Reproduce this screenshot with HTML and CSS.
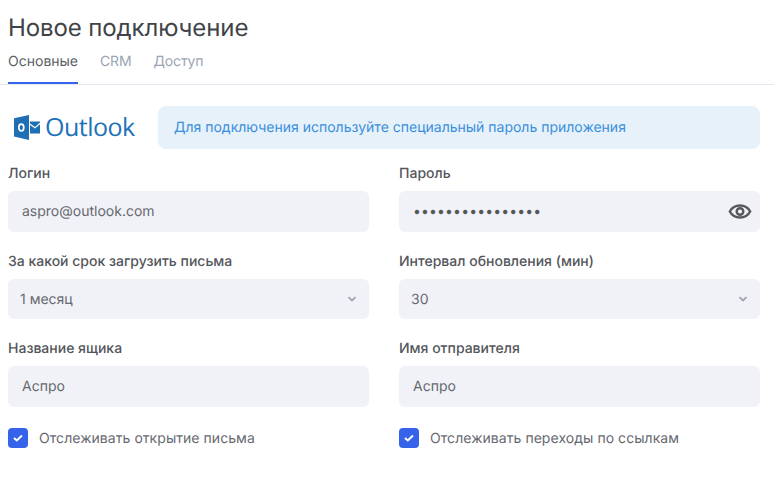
FILE: index.html
```html
<!DOCTYPE html>
<html lang="ru">
<head>
<meta charset="utf-8">
<title>Новое подключение</title>
<link rel="stylesheet" href="styles.css">
</head>
<body>
<header class="head">
  <h1 class="title">Новое подключение</h1>
  <nav class="tabs">
    <a class="tab active">Основные</a>
    <a class="tab">CRM</a>
    <a class="tab">Доступ</a>
  </nav>
</header>
<main class="content">
  <div class="top">
    <div class="logo">
      <svg class="logo-icon" width="27" height="25" viewBox="0 0 27 25">
        <path d="M0 3.2 L15 0 V25 L0 21.6 Z" fill="#1f6fb5"/>
        <path d="M16 6.500 H26 V7.500 L21 12 L16 8.600 Z" fill="#1f6fb5"/>
        <path d="M16 10 L21 13.600 L26 9.200 V18.500 H16 Z" fill="#1f6fb5"/>
        <ellipse cx="7.300" cy="12.500" rx="2.500" ry="3.400" fill="none" stroke="#fff" stroke-width="1.700"/>
      </svg>
      <span class="logo-text">Outlook</span>
    </div>
    <div class="notice">Для подключения используйте специальный пароль приложения</div>
  </div>
  <form class="grid">
    <div class="field">
      <span class="label">Логин</span>
      <div class="control"><span class="value">aspro@outlook.com</span></div>
    </div>
    <div class="field">
      <span class="label">Пароль</span>
      <div class="control">
        <span class="value dots">••••••••••••••••</span>
        <svg class="eye" width="24" height="24" viewBox="0 0 24 24">
          <path d="M12 6.500C7.500 6.500 3.700 9 1.800 12.500 3.700 16 7.500 18.500 12 18.500S20.300 16 22.200 12.500C20.300 9 16.500 6.500 12 6.500Z" fill="none" stroke="#55585d" stroke-width="2.400"/>
          <circle cx="12" cy="12.500" r="3.300" fill="none" stroke="#55585d" stroke-width="2.400"/>
        </svg>
      </div>
    </div>
    <div class="field">
      <span class="label">За какой срок загрузить письма</span>
      <div class="control select"><span class="value">1 месяц</span>
        <svg class="chev" width="10" height="6" viewBox="0 0 10 6"><path d="M1.500 1.200 5 4.500 8.500 1.200" fill="none" stroke="#9aa5b4" stroke-width="1.800"/></svg>
      </div>
    </div>
    <div class="field">
      <span class="label">Интервал обновления (мин)</span>
      <div class="control select"><span class="value">30</span>
        <svg class="chev" width="10" height="6" viewBox="0 0 10 6"><path d="M1.500 1.200 5 4.500 8.500 1.200" fill="none" stroke="#9aa5b4" stroke-width="1.800"/></svg>
      </div>
    </div>
    <div class="field">
      <span class="label">Название ящика</span>
      <div class="control"><span class="value">Аспро</span></div>
    </div>
    <div class="field">
      <span class="label">Имя отправителя</span>
      <div class="control"><span class="value">Аспро</span></div>
    </div>
    <div class="check">
      <span class="box"><svg width="12" height="10" viewBox="0 0 12 10"><path d="M2 5 4.800 7.500 10 2.500" fill="none" stroke="#fff" stroke-width="2"/></svg></span>
      <span class="check-text">Отслеживать открытие письма</span>
    </div>
    <div class="check">
      <span class="box"><svg width="12" height="10" viewBox="0 0 12 10"><path d="M2 5 4.800 7.500 10 2.500" fill="none" stroke="#fff" stroke-width="2"/></svg></span>
      <span class="check-text">Отслеживать переходы по ссылкам</span>
    </div>
  </form>
</main>
</body>
</html>
```
FILE: styles.css
```css
* { box-sizing: border-box; }
html, body { margin: 0; padding: 0; background: #fff; overflow: hidden; }
body { font-family: Inter, "Liberation Sans", sans-serif; color: #4a4d52; font-size: 14px; text-rendering: geometricPrecision; }
.head { border-bottom: 1px solid #e6e9f2; padding: 13px 8px 0; height: 85px; }
.title { margin: 0; font-size: 24px; line-height: 30px; font-weight: 400; color: #404347; letter-spacing: -0.1px; }
.tabs { display: flex; gap: 22px; margin-top: 3px; }
.tab { line-height: 16px; color: #9aa5b4; padding: 8px 0 12px; border-bottom: 2px solid transparent; height: 38px; letter-spacing: -0.15px; }
.tab.active { color: #5c5f64; border-bottom-color: #3563e9; letter-spacing: 0; }
.content { padding: 21px 14px 0 8px; }
.top { display: flex; align-items: center; height: 43px; }
.logo { width: 150px; display: flex; align-items: center; padding-left: 6px; gap: 4px; flex: none; }
.logo-text { font-family: "Open Sans", sans-serif; font-size: 25px; font-weight: 400; color: #2272b8; line-height: 30px; padding-bottom: 1px; letter-spacing: -0.5px; }
.notice { flex: 1; height: 43px; background: #e6f1fa; border-radius: 8px; color: #3a8fdc; line-height: 43px; padding-left: 16px; }
.grid { display: grid; grid-template-columns: 361px 361px; column-gap: 30px; margin-top: 15px; row-gap: 20px; }
.field { display: flex; flex-direction: column; }
.label { font-weight: 450; line-height: 20px; height: 27px; color: #53565b; }
.control { height: 41px; background: #f1f2f7; border-radius: 6px; padding: 0 14px; display: flex; align-items: center; justify-content: space-between; color: #66696f; }
.select { height: 40px; padding: 0 12px; }
.dots { letter-spacing: 0.15px; color: #55585d; }
.eye { margin: 0 -6px 1px 0; }
.check { display: flex; align-items: center; gap: 11px; height: 20px; margin-top: 1px; color: #66696f; }
.check-text { letter-spacing: 0.05px; }
.box { width: 20px; height: 20px; background: #3563e9; border-radius: 4px; display: flex; align-items: center; justify-content: center; }
```
